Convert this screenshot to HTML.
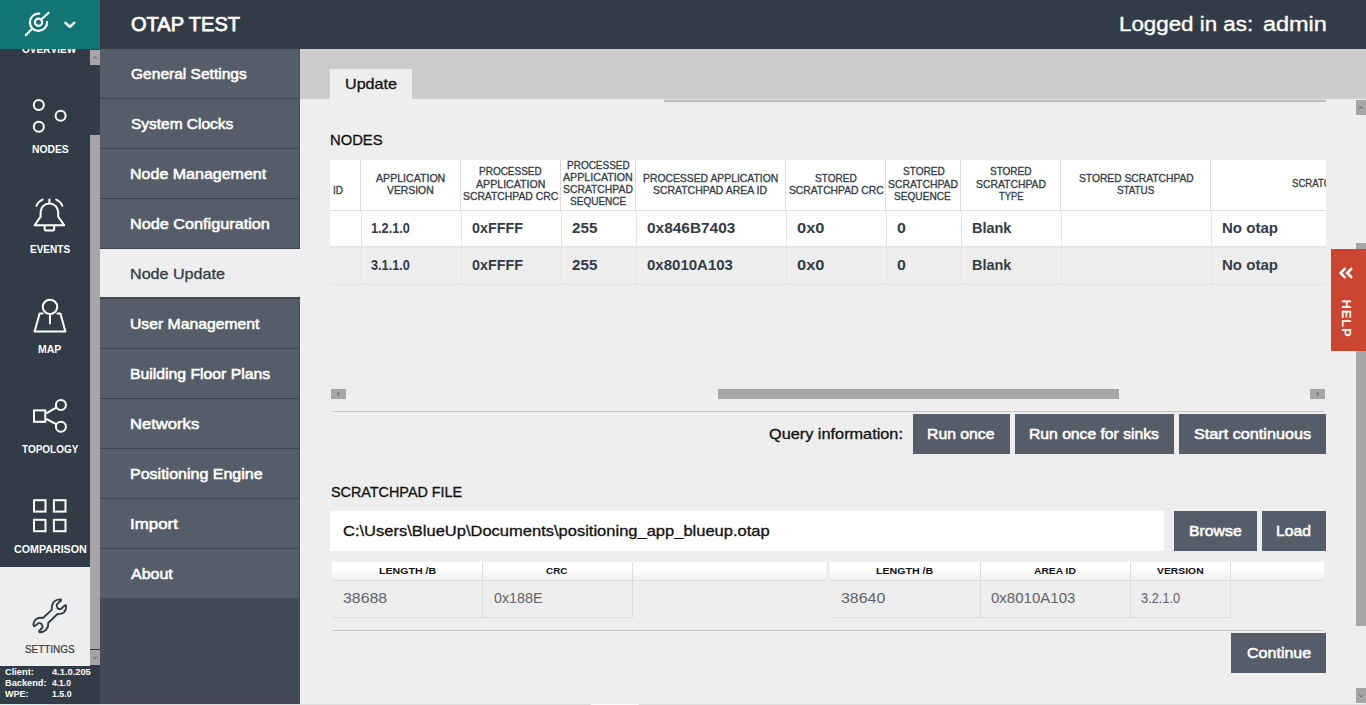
<!DOCTYPE html>
<html>
<head>
<meta charset="utf-8">
<title>OTAP TEST</title>
<style>
*{box-sizing:border-box;margin:0;padding:0}
html,body{width:1366px;height:705px;overflow:hidden;background:#eeeeee;font-family:"Liberation Sans",sans-serif;color:#323c47}
.a{position:absolute}
.t{position:absolute;white-space:pre;line-height:1;transform-origin:0 0}
.sb{position:absolute;background:#a6a6a6}
.btn{position:absolute;height:40px;background:#555e68}
.mi{position:absolute;left:100px;width:200px;height:49px;background:#555e68;border-right:1px solid #4b535e}
.vl{position:absolute;width:1px;background:#dddddd}
.hl{position:absolute;height:1px;background:#dddddd}
</style>
</head>
<body>
<!-- top bar -->
<div class="a" style="left:0;top:0;width:1366px;height:49px;background:#323c47;z-index:5"></div>
<div class="a" style="left:0;top:0;width:100px;height:49px;background:#127475;z-index:5"><svg width="100" height="49" fill="none" stroke="#fff" stroke-width="2.2" stroke-linecap="round">
  <circle cx="38.5" cy="22.3" r="3.6"/>
  <path d="M39.3 13.7A8.6 8.6 0 1 0 47.1 22"/>
  <path d="M25.8 35.1L32.2 28.7M42 18.7L48.5 12.7"/>
  <path d="M65.5 22.8L69.8 26.8L74.2 22.8" stroke-linejoin="round" stroke-width="2.5"/>
</svg></div>
<!-- sidebar -->
<div class="a" style="left:0;top:49px;width:100px;height:655px;background:#323c47"></div>
<div class="a" style="left:0;top:567px;width:90px;height:99px;background:#eeeeee"></div>
<svg class="a" style="left:0;top:49px" width="100" height="655" viewBox="0 49 100 655" fill="none" stroke="#fff" stroke-width="2">
  <circle cx="38.8" cy="104.9" r="5"/><circle cx="60.6" cy="115.8" r="5"/><circle cx="38.8" cy="126.7" r="5"/>
  <g stroke-linecap="round" stroke-linejoin="round">
  <path d="M49.4 199.6V203"/>
  <path d="M34.6 225.2L40.6 216.6V212.2A8.8 8.8 0 0 1 58.2 212.2V216.6L64.2 225.2Z"/>
  <path d="M44.6 226V229.2Q44.6 230.6 46 230.6H52.8Q54.2 230.6 54.2 229.2V226"/>
  <path d="M36.4 205.8A11 11 0 0 1 42.6 199.6"/>
  <path d="M56.2 199.6A11 11 0 0 1 62.4 205.8"/>
  </g>
  <circle cx="50" cy="306.9" r="7.2"/>
  <path d="M50 314.4V323.6" stroke-linecap="round"/>
  <path d="M42.6 313.4H39.6L34.6 331.6H65.4L60.4 313.4H57.4" stroke-linejoin="round" stroke-linecap="round"/>
  <rect x="34" y="410.4" width="11.3" height="11.4"/>
  <circle cx="60.9" cy="404.9" r="5"/><circle cx="60.9" cy="426.7" r="5"/>
  <path d="M46.2 413.3L56.2 407.6M46.2 418.8L56.2 424.2"/>
  <rect x="34" y="500.2" width="11.5" height="11.4"/><rect x="53.9" y="500.2" width="11.6" height="11.4"/>
  <rect x="34" y="519.8" width="11.5" height="11.4"/><rect x="53.9" y="519.8" width="11.6" height="11.4"/>
  <g transform="translate(10,590) scale(0.0993)" stroke="#323c47" stroke-width="19" stroke-linejoin="round" stroke-linecap="round">
    <path d="M420 200 Q418 150 440 120 Q470 92 510 95 Q520 100 510 108 L472 145 Q465 165 480 185 Q495 195 512 192 L552 155 Q562 148 565 160 Q568 200 545 225 Q515 248 478 242 L385 332 Q390 370 365 400 Q335 425 300 425 Q288 420 295 412 L325 380 Q332 360 318 342 Q300 330 285 335 L250 362 Q238 368 236 352 Q238 312 265 292 Q295 275 332 282 Z"/>
  </g>
</svg>
<div class="sb" style="left:90px;top:50px;width:10px;height:15px"></div>
<div class="sb" style="left:90px;top:135px;width:10px;height:514px"></div>
<div class="sb" style="left:90px;top:650px;width:10px;height:15px"></div>
<svg class="a" style="left:90px;top:50px" width="10" height="615" fill="none" stroke="#666" stroke-width="1">
  <path d="M3.2 9L5 6.6L6.8 9"/><path d="M3.2 606.5L5 609L6.8 606.5"/>
</svg>
<!-- menu -->
<div class="a" style="left:100px;top:49px;width:200px;height:549px;background:#3f4752"></div><div class="a" style="left:100px;top:598px;width:200px;height:106px;background:#444b56"></div>
<div class="mi" style="top:49px"></div>
<div class="mi" style="top:99px"></div>
<div class="mi" style="top:149px"></div>
<div class="mi" style="top:199px"></div>
<div class="mi" style="top:249px;height:48px;background:#eeeeee;border:0"></div>
<div class="mi" style="top:299px"></div>
<div class="mi" style="top:349px"></div>
<div class="mi" style="top:399px"></div>
<div class="mi" style="top:449px"></div>
<div class="mi" style="top:499px"></div>
<div class="mi" style="top:549px"></div>
<!-- tab bar -->
<div class="a" style="left:300px;top:49px;width:1066px;height:50px;background:#cccccc"></div>
<div class="a" style="left:330px;top:69px;width:82px;height:31px;background:#eeeeee"></div>
<div class="a" style="left:664px;top:99px;width:662px;height:3px;background:#bbbbbb;border-top:1px solid #e4e4e4"></div>
<!-- nodes grid -->
<div class="a" style="left:330px;top:160px;width:996px;height:87px;background:#ffffff"></div>
<div class="a" style="left:330px;top:247px;width:996px;height:37px;background:#eeeeee"></div>
<div class="hl" style="left:330px;top:210px;width:996px"></div>
<div class="hl" style="left:330px;top:246px;width:996px;height:2px;background:#e5e5e5"></div>
<div class="hl" style="left:330px;top:284px;width:996px;background:#e2e2e2"></div>
<div class="vl" style="left:360px;top:160px;height:50px"></div>
<div class="vl" style="left:361px;top:211px;height:73px;background:#e4e4e4"></div>
<div class="vl" style="left:460px;top:160px;height:50px"></div>
<div class="vl" style="left:461px;top:211px;height:73px;background:#e4e4e4"></div>
<div class="vl" style="left:560px;top:160px;height:50px"></div>
<div class="vl" style="left:561px;top:211px;height:73px;background:#e4e4e4"></div>
<div class="vl" style="left:635px;top:160px;height:50px"></div>
<div class="vl" style="left:636px;top:211px;height:73px;background:#e4e4e4"></div>
<div class="vl" style="left:785px;top:160px;height:50px"></div>
<div class="vl" style="left:786px;top:211px;height:73px;background:#e4e4e4"></div>
<div class="vl" style="left:885px;top:160px;height:50px"></div>
<div class="vl" style="left:886px;top:211px;height:73px;background:#e4e4e4"></div>
<div class="vl" style="left:960px;top:160px;height:50px"></div>
<div class="vl" style="left:961px;top:211px;height:73px;background:#e4e4e4"></div>
<div class="vl" style="left:1060px;top:160px;height:50px"></div>
<div class="vl" style="left:1061px;top:211px;height:73px;background:#e4e4e4"></div>
<div class="vl" style="left:1210px;top:160px;height:50px"></div>
<div class="vl" style="left:1211px;top:211px;height:73px;background:#e4e4e4"></div>
<!-- h scrollbar -->
<div class="sb" style="left:331px;top:389px;width:15px;height:10px"></div>
<div class="sb" style="left:718px;top:389px;width:401px;height:10px"></div>
<div class="sb" style="left:1310px;top:389px;width:15px;height:10px"></div>
<svg class="a" style="left:331px;top:389px" width="995" height="10" fill="none" stroke="#666" stroke-width="1">
  <path d="M8.6 3.2L6.4 5L8.6 6.8"/><path d="M985.4 3.2L987.6 5L985.4 6.8"/>
</svg>
<div class="hl" style="left:332px;top:411px;width:992px;background:#c8c8c8"></div>
<!-- buttons -->
<div class="btn" style="left:913px;top:414px;width:96.5px"></div>
<div class="btn" style="left:1014.5px;top:414px;width:159.5px"></div>
<div class="btn" style="left:1179px;top:414px;width:147px"></div>
<div class="a" style="left:330px;top:511px;width:834px;height:40px;background:#ffffff"></div>
<div class="btn" style="left:1174px;top:511px;width:82.5px"></div>
<div class="btn" style="left:1261.5px;top:511px;width:64.5px"></div>
<div class="btn" style="left:1231px;top:633px;width:95px"></div>
<!-- lower tables -->
<div class="a" style="left:332px;top:562px;width:494px;height:18px;background:linear-gradient(#ffffff 40%,#f0f0f0)"></div>
<div class="a" style="left:830px;top:562px;width:494px;height:18px;background:linear-gradient(#ffffff 40%,#f0f0f0)"></div>
<div class="hl" style="left:332px;top:580px;width:494px"></div>
<div class="hl" style="left:830px;top:580px;width:494px"></div>
<div class="hl" style="left:332px;top:617px;width:301px"></div>
<div class="hl" style="left:830px;top:617px;width:401px"></div>
<div class="vl" style="left:482px;top:562px;height:56px"></div>
<div class="vl" style="left:632px;top:562px;height:56px"></div>
<div class="vl" style="left:980px;top:562px;height:56px"></div>
<div class="vl" style="left:1130px;top:562px;height:56px"></div>
<div class="vl" style="left:1230px;top:562px;height:56px"></div>
<div class="hl" style="left:332px;top:630px;width:992px;background:#c8c8c8"></div>
<!-- v scrollbar -->
<div class="sb" style="left:1356px;top:100px;width:10px;height:15px"></div>
<div class="sb" style="left:1356px;top:243px;width:10px;height:383px"></div>
<div class="sb" style="left:1356px;top:688px;width:10px;height:15px"></div>
<svg class="a" style="left:1356px;top:100px" width="10" height="603" fill="none" stroke="#666" stroke-width="1">
  <path d="M3.2 9L5 6.6L6.8 9"/><path d="M3.2 594.5L5 597L6.8 594.5"/>
</svg>
<!-- help -->
<div class="a" style="left:1331px;top:249px;width:35px;height:102px;background:#cc4530"></div>
<svg class="a" style="left:1331px;top:249px" width="35" height="102" fill="none" stroke="#fff" stroke-width="2">
  <path d="M14.4 19.2L9.6 24L14.4 28.8M21 19.2L16.2 24L21 28.8" stroke-width="2.6"/>
</svg>
<span class="t" style="left:1338.5px;top:50px;font-size:13px;font-weight:bold;color:#fff;letter-spacing:0.8px;transform-origin:0 0;transform:translate(14px,249.5px) rotate(90deg)">HELP</span>
<!-- bottom strip -->
<div class="a" style="left:0;top:704px;width:1366px;height:1px;background:#dddcda;z-index:9"></div><div class="a" style="left:0;top:704px;width:48px;height:1px;background:#d6f3f3;z-index:9"></div><div class="a" style="left:591px;top:704px;width:48px;height:1px;background:#fafafa;z-index:9"></div>
<div class="a" style="left:1211px;top:161px;width:115px;height:49px;overflow:hidden"><span class="t" style="left:80.5px;top:18px;font-size:10.2px;color:#323c47;-webkit-text-stroke:0.3px #323c47;transform:scaleX(0.94)">SCRATCHPAD STATUS MESSAGE</span></div>
<span class="t" style="left:130.68px;top:13.77px;font-size:20px;color:#fff;transform:scaleX(1.0012);-webkit-text-stroke:0.75px #fff;z-index:6;">OTAP TEST</span>
<span class="t" style="left:1118.96px;top:13.87px;font-size:20px;color:#fff;transform:scaleX(1.1166);-webkit-text-stroke:0.35px #fff;z-index:6;">Logged in as:</span>
<span class="t" style="left:1262.77px;top:13.87px;font-size:20px;color:#fff;transform:scaleX(1.1725);-webkit-text-stroke:0.35px #fff;z-index:6;">admin</span>
<span class="t" style="left:130.68px;top:66.00px;font-size:15px;color:#fff;transform:scaleX(1.0361);-webkit-text-stroke:0.55px #fff;">General Settings</span>
<span class="t" style="left:130.68px;top:116.00px;font-size:15px;color:#fff;transform:scaleX(1.0311);-webkit-text-stroke:0.55px #fff;">System Clocks</span>
<span class="t" style="left:129.61px;top:166.00px;font-size:15px;color:#fff;transform:scaleX(1.0678);-webkit-text-stroke:0.55px #fff;">Node Management</span>
<span class="t" style="left:129.59px;top:216.00px;font-size:15px;color:#fff;transform:scaleX(1.0824);-webkit-text-stroke:0.55px #fff;">Node Configuration</span>
<span class="t" style="left:129.58px;top:266.00px;font-size:15px;color:#323c47;transform:scaleX(1.0740);-webkit-text-stroke:0.3px #323c47;">Node Update</span>
<span class="t" style="left:129.63px;top:316.00px;font-size:15px;color:#fff;transform:scaleX(1.0481);-webkit-text-stroke:0.55px #fff;">User Management</span>
<span class="t" style="left:129.63px;top:366.00px;font-size:15px;color:#fff;transform:scaleX(1.0496);-webkit-text-stroke:0.55px #fff;">Building Floor Plans</span>
<span class="t" style="left:129.57px;top:416.00px;font-size:15px;color:#fff;transform:scaleX(1.1072);-webkit-text-stroke:0.55px #fff;">Networks</span>
<span class="t" style="left:129.61px;top:466.00px;font-size:15px;color:#fff;transform:scaleX(1.0670);-webkit-text-stroke:0.55px #fff;">Positioning Engine</span>
<span class="t" style="left:129.55px;top:516.00px;font-size:15px;color:#fff;transform:scaleX(1.1254);-webkit-text-stroke:0.55px #fff;">Import</span>
<span class="t" style="left:130.68px;top:566.00px;font-size:15px;color:#fff;transform:scaleX(1.0654);-webkit-text-stroke:0.55px #fff;">About</span>
<span class="t" style="left:22.10px;top:44.64px;font-size:10px;font-weight:bold;color:#fff;transform:scaleX(1.0115);">OVERVIEW</span>
<span class="t" style="left:31.80px;top:144.63px;font-size:10px;font-weight:bold;color:#fff;transform:scaleX(1.0337);">NODES</span>
<span class="t" style="left:29.90px;top:244.63px;font-size:10px;font-weight:bold;color:#fff;transform:scaleX(1.0015);">EVENTS</span>
<span class="t" style="left:38.30px;top:344.64px;font-size:10px;font-weight:bold;color:#fff;transform:scaleX(1.0465);">MAP</span>
<span class="t" style="left:21.90px;top:444.64px;font-size:10px;font-weight:bold;color:#fff;transform:scaleX(0.9961);">TOPOLOGY</span>
<span class="t" style="left:14.00px;top:544.63px;font-size:10px;font-weight:bold;color:#fff;transform:scaleX(1.0673);">COMPARISON</span>
<span class="t" style="left:25.00px;top:644.63px;font-size:10px;color:#323c47;transform:scaleX(0.9914);-webkit-text-stroke:0.2px #323c47;">SETTINGS</span>
<span class="t" style="left:5.20px;top:668.32px;font-size:8.6px;font-weight:bold;color:#fff;transform:scaleX(1.0792);">Client:</span>
<span class="t" style="left:52.00px;top:668.32px;font-size:8.6px;font-weight:bold;color:#fff;transform:scaleX(1.0815);">4.1.0.205</span>
<span class="t" style="left:5.20px;top:679.22px;font-size:8.6px;font-weight:bold;color:#fff;transform:scaleX(1.0715);">Backend:</span>
<span class="t" style="left:52.00px;top:679.22px;font-size:8.6px;font-weight:bold;color:#fff;transform:scaleX(0.9931);">4.1.0</span>
<span class="t" style="left:5.20px;top:690.12px;font-size:8.6px;font-weight:bold;color:#fff;transform:scaleX(1.0454);">WPE:</span>
<span class="t" style="left:52.00px;top:690.12px;font-size:8.6px;font-weight:bold;color:#fff;transform:scaleX(1.0241);">1.5.0</span>
<span class="t" style="left:344.74px;top:76.53px;font-size:14.5px;color:#111;transform:scaleX(1.1118);-webkit-text-stroke:0.3px #111;">Update</span>
<span class="t" style="left:330.03px;top:132.53px;font-size:14.5px;color:#111;transform:scaleX(1.0202);-webkit-text-stroke:0.3px #111;">NODES</span>
<span class="t" style="left:330.65px;top:484.73px;font-size:14.5px;color:#111;transform:scaleX(0.9908);-webkit-text-stroke:0.3px #111;">SCRATCHPAD FILE</span>
<span class="t" style="left:769.35px;top:426.73px;font-size:14.5px;color:#111;transform:scaleX(1.1231);-webkit-text-stroke:0.3px #111;">Query information:</span>
<span class="t" style="left:342.55px;top:523.53px;font-size:14.5px;color:#111;transform:scaleX(1.1384);-webkit-text-stroke:0.3px #111;">C:\Users\BlueUp\Documents\positioning_app_blueup.otap</span>
<span class="t" style="left:927.22px;top:426.30px;font-size:15px;color:#fff;transform:scaleX(1.0506);-webkit-text-stroke:0.55px #fff;">Run once</span>
<span class="t" style="left:1029.13px;top:426.30px;font-size:15px;color:#fff;transform:scaleX(1.0458);-webkit-text-stroke:0.55px #fff;">Run once for sinks</span>
<span class="t" style="left:1194.38px;top:426.30px;font-size:15px;color:#fff;transform:scaleX(1.0793);-webkit-text-stroke:0.55px #fff;">Start continuous</span>
<span class="t" style="left:1188.72px;top:523.20px;font-size:15px;color:#fff;transform:scaleX(1.0529);-webkit-text-stroke:0.55px #fff;">Browse</span>
<span class="t" style="left:1276.13px;top:523.20px;font-size:15px;color:#fff;transform:scaleX(1.0476);-webkit-text-stroke:0.55px #fff;">Load</span>
<span class="t" style="left:1246.88px;top:645.30px;font-size:15px;color:#fff;transform:scaleX(1.0695);-webkit-text-stroke:0.55px #fff;">Continue</span>
<span class="t" style="left:333.35px;top:186.07px;font-size:10.2px;color:#323c47;transform:scaleX(0.9867);-webkit-text-stroke:0.3px #323c47;">ID</span>
<span class="t" style="left:376.15px;top:173.67px;font-size:10.2px;color:#323c47;transform:scaleX(1.0399);-webkit-text-stroke:0.3px #323c47;">APPLICATION</span>
<span class="t" style="left:387.35px;top:185.77px;font-size:10.2px;color:#323c47;transform:scaleX(1.0177);-webkit-text-stroke:0.3px #323c47;">VERSION</span>
<span class="t" style="left:479.45px;top:167.47px;font-size:10.2px;color:#323c47;transform:scaleX(0.9809);-webkit-text-stroke:0.3px #323c47;">PROCESSED</span>
<span class="t" style="left:476.15px;top:179.57px;font-size:10.2px;color:#323c47;transform:scaleX(1.0415);-webkit-text-stroke:0.3px #323c47;">APPLICATION</span>
<span class="t" style="left:463.25px;top:191.67px;font-size:10.2px;color:#323c47;transform:scaleX(1.0170);-webkit-text-stroke:0.3px #323c47;">SCRATCHPAD CRC</span>
<span class="t" style="left:566.55px;top:160.57px;font-size:10.2px;color:#323c47;transform:scaleX(0.9809);-webkit-text-stroke:0.3px #323c47;">PROCESSED</span>
<span class="t" style="left:563.35px;top:172.87px;font-size:10.2px;color:#323c47;transform:scaleX(1.0475);-webkit-text-stroke:0.3px #323c47;">APPLICATION</span>
<span class="t" style="left:563.35px;top:185.17px;font-size:10.2px;color:#323c47;transform:scaleX(1.0173);-webkit-text-stroke:0.3px #323c47;">SCRATCHPAD</span>
<span class="t" style="left:570.25px;top:197.47px;font-size:10.2px;color:#323c47;transform:scaleX(0.9847);-webkit-text-stroke:0.3px #323c47;">SEQUENCE</span>
<span class="t" style="left:643.05px;top:173.67px;font-size:10.2px;color:#323c47;transform:scaleX(1.0176);-webkit-text-stroke:0.3px #323c47;">PROCESSED APPLICATION</span>
<span class="t" style="left:653.25px;top:185.77px;font-size:10.2px;color:#323c47;transform:scaleX(1.0250);-webkit-text-stroke:0.3px #323c47;">SCRATCHPAD AREA ID</span>
<span class="t" style="left:814.85px;top:173.67px;font-size:10.2px;color:#323c47;transform:scaleX(0.9902);-webkit-text-stroke:0.3px #323c47;">STORED</span>
<span class="t" style="left:788.65px;top:185.77px;font-size:10.2px;color:#323c47;transform:scaleX(1.0116);-webkit-text-stroke:0.3px #323c47;">SCRATCHPAD CRC</span>
<span class="t" style="left:902.65px;top:167.47px;font-size:10.2px;color:#323c47;transform:scaleX(0.9854);-webkit-text-stroke:0.3px #323c47;">STORED</span>
<span class="t" style="left:888.25px;top:179.57px;font-size:10.2px;color:#323c47;transform:scaleX(1.0188);-webkit-text-stroke:0.3px #323c47;">SCRATCHPAD</span>
<span class="t" style="left:894.45px;top:191.67px;font-size:10.2px;color:#323c47;transform:scaleX(0.9934);-webkit-text-stroke:0.3px #323c47;">SEQUENCE</span>
<span class="t" style="left:990.15px;top:167.47px;font-size:10.2px;color:#323c47;transform:scaleX(0.9807);-webkit-text-stroke:0.3px #323c47;">STORED</span>
<span class="t" style="left:975.85px;top:179.57px;font-size:10.2px;color:#323c47;transform:scaleX(1.0188);-webkit-text-stroke:0.3px #323c47;">SCRATCHPAD</span>
<span class="t" style="left:998.65px;top:191.67px;font-size:10.2px;color:#323c47;transform:scaleX(0.9175);-webkit-text-stroke:0.3px #323c47;">TYPE</span>
<span class="t" style="left:1078.65px;top:173.67px;font-size:10.2px;color:#323c47;transform:scaleX(1.0087);-webkit-text-stroke:0.3px #323c47;">STORED SCRATCHPAD</span>
<span class="t" style="left:1117.15px;top:185.77px;font-size:10.2px;color:#323c47;transform:scaleX(0.9620);-webkit-text-stroke:0.3px #323c47;">STATUS</span>
<span class="t" style="left:371.10px;top:220.95px;font-size:14px;font-weight:bold;color:#323c47;transform:scaleX(0.9064);">1.2.1.0</span>
<span class="t" style="left:471.90px;top:220.95px;font-size:14px;font-weight:bold;color:#323c47;transform:scaleX(1.0233);">0xFFFF</span>
<span class="t" style="left:571.50px;top:220.95px;font-size:14px;font-weight:bold;color:#323c47;transform:scaleX(1.0903);">255</span>
<span class="t" style="left:647.00px;top:220.95px;font-size:14px;font-weight:bold;color:#323c47;transform:scaleX(1.1020);">0x846B7403</span>
<span class="t" style="left:796.80px;top:220.95px;font-size:14px;font-weight:bold;color:#323c47;transform:scaleX(1.1751);">0x0</span>
<span class="t" style="left:897.10px;top:220.95px;font-size:14px;font-weight:bold;color:#323c47;transform:scaleX(1.1375);">0</span>
<span class="t" style="left:972.20px;top:220.95px;font-size:14px;font-weight:bold;color:#323c47;transform:scaleX(1.0329);">Blank</span>
<span class="t" style="left:1222.00px;top:220.95px;font-size:14px;font-weight:bold;color:#323c47;transform:scaleX(1.0746);">No otap</span>
<span class="t" style="left:371.10px;top:257.95px;font-size:14px;font-weight:bold;color:#323c47;transform:scaleX(0.9064);">3.1.1.0</span>
<span class="t" style="left:471.90px;top:257.95px;font-size:14px;font-weight:bold;color:#323c47;transform:scaleX(1.0233);">0xFFFF</span>
<span class="t" style="left:571.50px;top:257.95px;font-size:14px;font-weight:bold;color:#323c47;transform:scaleX(1.0903);">255</span>
<span class="t" style="left:647.00px;top:257.95px;font-size:14px;font-weight:bold;color:#323c47;transform:scaleX(1.0721);">0x8010A103</span>
<span class="t" style="left:796.80px;top:257.95px;font-size:14px;font-weight:bold;color:#323c47;transform:scaleX(1.1751);">0x0</span>
<span class="t" style="left:897.10px;top:257.95px;font-size:14px;font-weight:bold;color:#323c47;transform:scaleX(1.1375);">0</span>
<span class="t" style="left:972.20px;top:257.95px;font-size:14px;font-weight:bold;color:#323c47;transform:scaleX(1.0329);">Blank</span>
<span class="t" style="left:1222.00px;top:257.95px;font-size:14px;font-weight:bold;color:#323c47;transform:scaleX(1.0746);">No otap</span>
<span class="t" style="left:378.50px;top:566.27px;font-size:9.6px;font-weight:bold;color:#111;transform:scaleX(1.1049);">LENGTH /B</span>
<span class="t" style="left:546.00px;top:566.27px;font-size:9.6px;font-weight:bold;color:#111;transform:scaleX(1.0356);">CRC</span>
<span class="t" style="left:876.30px;top:566.27px;font-size:9.6px;font-weight:bold;color:#111;transform:scaleX(1.1068);">LENGTH /B</span>
<span class="t" style="left:1033.70px;top:566.27px;font-size:9.6px;font-weight:bold;color:#111;transform:scaleX(1.0705);">AREA ID</span>
<span class="t" style="left:1156.70px;top:566.27px;font-size:9.6px;font-weight:bold;color:#111;transform:scaleX(1.0797);">VERSION</span>
<span class="t" style="left:342.90px;top:590.30px;font-size:15px;color:#5e636c;transform:scaleX(1.0588);">38688</span>
<span class="t" style="left:493.50px;top:590.30px;font-size:15px;color:#5e636c;transform:scaleX(0.9534);">0x188E</span>
<span class="t" style="left:841.00px;top:590.30px;font-size:15px;color:#5e636c;transform:scaleX(1.0636);">38640</span>
<span class="t" style="left:991.40px;top:590.30px;font-size:15px;color:#5e636c;transform:scaleX(1.0012);">0x8010A103</span>
<span class="t" style="left:1140.80px;top:590.30px;font-size:15px;color:#5e636c;transform:scaleX(0.8544);">3.2.1.0</span>
</body>
</html>
